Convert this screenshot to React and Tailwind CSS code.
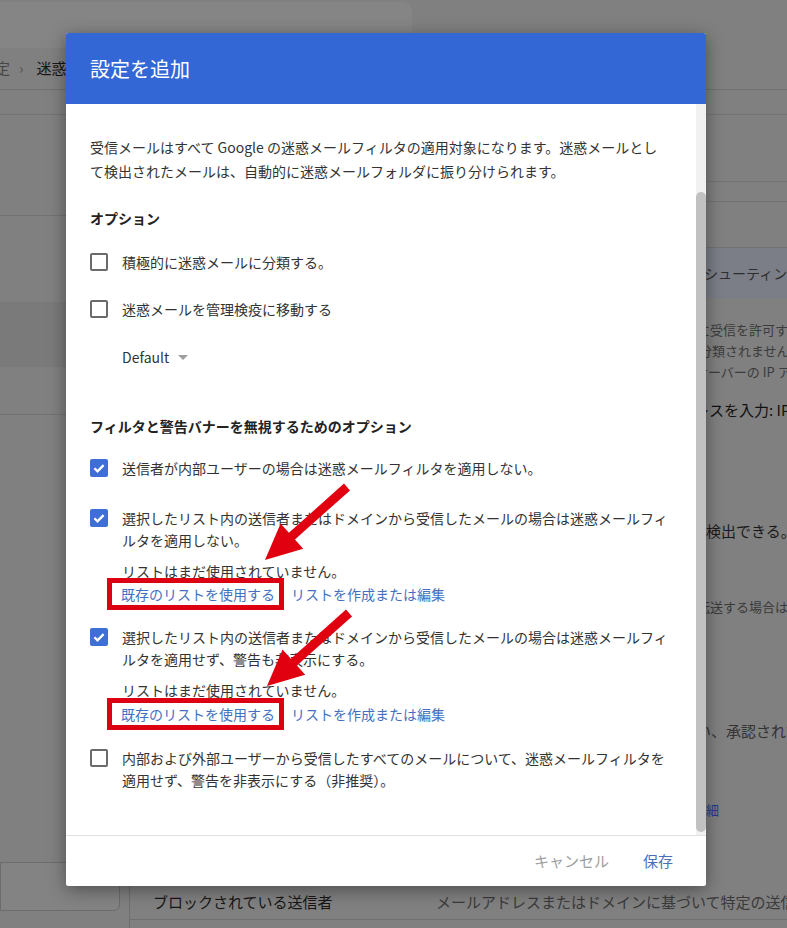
import React from "react";

const jp = "font-['Noto_Sans_CJK_JP','Noto_Sans',sans-serif]";

function Checkbox({ checked }) {
  if (checked) {
    return (
      <span className="mt-[2px] flex h-[18px] w-[18px] shrink-0 items-center justify-center rounded-[2px] bg-[#3d6fd6]">
        <svg width="14" height="14" viewBox="0 0 14 14">
          <path d="M2.4 7.3l3.1 3.1 6.1-6.3" fill="none" stroke="#fff" strokeWidth="2.3" />
        </svg>
      </span>
    );
  }
  return <span className="mt-[2px] h-[18px] w-[18px] shrink-0 rounded-[2px] border-2 border-[#6b6b6b]" />;
}

function Option({ checked, className, children }) {
  return (
    <div className={`flex gap-[14px] leading-[22px] ${className}`}>
      <Checkbox checked={checked} />
      <div>{children}</div>
    </div>
  );
}

// red pointer drawn over the dialog
function Arrow({ className }) {
  return (
    <svg className={`pointer-events-none absolute ${className}`} width="100" height="95" viewBox="0 0 100 95">
      <polygon
        points="89,5.6 33.9,54.8 25.6,45.4 10,82 48.2,70.8 39.9,61.5 95,12.4"
        fill="#e1000f"
      />
    </svg>
  );
}

function ListLinks({ arrowClass, className }) {
  return (
    <div className={`flex gap-[16px] leading-[22px] text-[#4470c0] ${className}`}>
      <span className="relative -ml-px">
        既存のリストを使用する
        <span className="pointer-events-none absolute -bottom-[5px] -left-[14px] -right-[9px] -top-[5px] border-[5px] border-[#dc0012]" />
        <Arrow className={arrowClass} />
      </span>
      <span>リストを作成または編集</span>
    </div>
  );
}

function Backdrop() {
  return (
    <div className="flex h-full flex-col">
      <div className="h-[48px]">
        <div className="mt-[2px] h-[46px] w-[412px] rounded-tr-[10px] bg-[#858585]" />
      </div>
      <div className="flex h-[42px] items-center whitespace-nowrap border-b border-[#707070] text-[15px]">
        <span className="-ml-[20px] text-[#454545]">設定</span>
        <span className="mx-[9px] text-[#555]">›</span>
        <span className="ml-[4px] text-[#151515]">迷惑メール</span>
      </div>

      <div className="flex flex-1">
        <div className="flex w-[130px] shrink-0 flex-col border-r border-[#6e6e6e]">
          <div className="h-[25px] border-b border-[#737373]" />
          <div className="h-[101px] border-b border-[#737373]" />
          <div className="h-[86px]" />
          <div className="h-[65px] bg-[#7a7a7a]" />
          <div className="h-[48px] border-b border-[#737373]" />
          <div className="mb-[17px] mt-auto h-[49px] w-[120px] rounded-br-[6px] border border-[#6c6c6c] bg-[#838383]" />
        </div>

        <div className="flex flex-1 flex-col whitespace-nowrap pb-[8px]">
          <div className="h-[25px] border-b border-[#737373]" />
          <div className="h-[67px] border-b border-[#737373]" />
          <div className="h-[20px] border-b border-[#737373]" />
          <div className="h-[46px] border-b border-[#737373]" />
          <div className="flex h-[50px] items-center bg-[#7b7e87] pl-[518px] text-[14px] text-[#2e2e2e]">
            トラブルシューティング
          </div>
          <div className="mt-[21px] text-[13px] leading-[21px] text-[#3b3b3b]">
            <div className="pl-[554px]">常に受信を許可する場合</div>
            <div className="pl-[517px]">スパムに分類されません。</div>
            <div className="pl-[565px]">サーバーの IP アドレス</div>
          </div>
          <div className="mt-[17px] pl-[534px] text-[15px] leading-[22px] text-[#111]">アドレスを入力: IP アドレス</div>
          <div className="mt-[99px] pl-[486px] text-[15px] leading-[22px] text-[#1a1a1a]">迷惑メールを検出できる。</div>
          <div className="mt-[54px] pl-[515px] text-[13px] leading-[21px] text-[#3a3a3a]">メールを転送する場合は</div>
          <div className="mt-[103px] pl-[536px] text-[15px] leading-[22px] text-[#333]">を用い、承認されていない</div>
          <div className="mt-[57px] pl-[563px] text-[13px] leading-[21px] text-[#1c3b8a]">詳細</div>
          <div className="mt-auto flex h-[34px] items-center border-b border-[#707070] pl-[23px] text-[15px]">
            <span className="w-[283px] text-[#161616]">ブロックされている送信者</span>
            <span className="text-[#3a3a3a]">メールアドレスまたはドメインに基づいて特定の送信者をブロック</span>
          </div>
        </div>
      </div>
    </div>
  );
}

export default function App() {
  return (
    <div className={`relative h-[928px] w-[787px] overflow-hidden bg-[#808080] ${jp}`}>
      <Backdrop />

      <div className="absolute left-[66px] top-[33px] flex w-[640px] flex-col rounded-[2px] bg-white shadow-[0_4px_18px_rgba(0,0,0,0.4)]">
        <div className="flex h-[71px] items-center rounded-t-[2px] bg-[#3367d6] px-[24px] text-[20px] text-white">
          設定を追加
        </div>

        <div className="flex h-[731px]">
          <div className="flex-1 pl-[24px] pt-[31px] text-[14px] text-[#333]">
            <p className="leading-[24px]">
              受信メールはすべて Google の迷惑メールフィルタの適用対象になります。迷惑メールとし
              <br />
              て検出されたメールは、自動的に迷惑メールフォルダに振り分けられます。
            </p>

            <div className="mt-[24px] font-bold leading-[22px] text-[#222]">オプション</div>
            <Option className="mt-[22px]">積極的に迷惑メールに分類する。</Option>
            <Option className="mt-[25px]">迷惑メールを管理検疫に移動する</Option>
            <div className="mt-[26px] flex items-center pl-[32px] leading-[22px]">
              Default
              <svg className="ml-[9px]" width="10" height="5" viewBox="0 0 10 5">
                <polygon points="0,0 10,0 5,5" fill="#9e9e9e" />
              </svg>
            </div>

            <div className="mt-[47px] font-bold leading-[22px] text-[#222]">
              フィルタと警告バナーを無視するためのオプション
            </div>
            <Option checked className="mt-[20px]">
              送信者が内部ユーザーの場合は迷惑メールフィルタを適用しない。
            </Option>
            <Option checked className="mt-[28px]">
              選択したリスト内の送信者またはドメインから受信したメールの場合は迷惑メールフィ
              <br />
              ルタを適用しない。
            </Option>
            <div className="mt-[9px] pl-[32px] leading-[22px]">リストはまだ使用されていません。</div>
            <div className="pl-[32px]">
              <ListLinks className="mt-[1px]" arrowClass="left-[134px] top-[-105px]" />
            </div>

            <Option checked className="mt-[21px]">
              選択したリスト内の送信者またはドメインから受信したメールの場合は迷惑メールフィ
              <br />
              ルタを適用せず、警告も非表示にする。
            </Option>
            <div className="mt-[9px] pl-[32px] leading-[22px]">リストはまだ使用されていません。</div>
            <div className="pl-[32px]">
              <ListLinks className="mt-[2px]" arrowClass="left-[136px] top-[-99px]" />
            </div>

            <Option className="mt-[22px]">
              内部および外部ユーザーから受信したすべてのメールについて、迷惑メールフィルタを
              <br />
              適用せず、警告を非表示にする（非推奨）。
            </Option>
          </div>

          <div className="relative w-[10px] shrink-0 bg-[#f1f1f1]">
            <div className="absolute left-0 right-0 top-[88px] h-[640px] rounded-full bg-[#c1c1c1]" />
          </div>
        </div>

        <div className="flex h-[51px] items-center justify-end gap-[34px] border-t border-[#e0e0e0] pr-[33px] text-[15px]">
          <span className="text-[#9e9e9e]">キャンセル</span>
          <span className="text-[#4a70b8]">保存</span>
        </div>
      </div>
    </div>
  );
}
